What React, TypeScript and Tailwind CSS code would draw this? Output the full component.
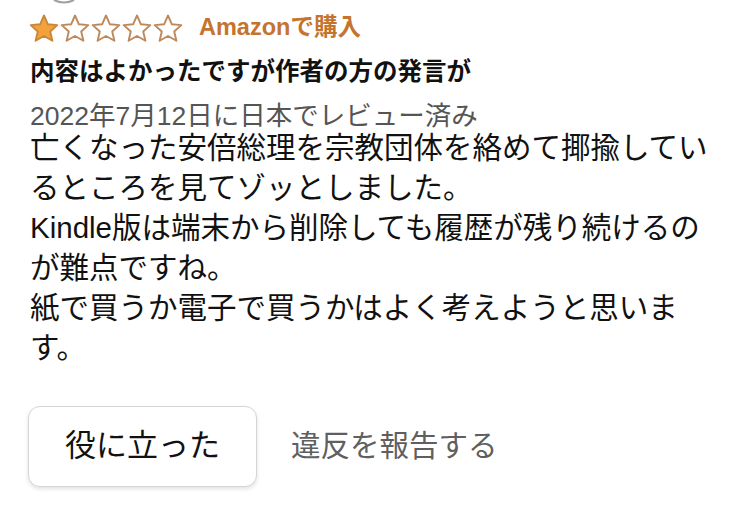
import React from 'react'

const font = '"Liberation Sans", "Noto Sans CJK JP", sans-serif'

const Star = ({ filled }: { filled: boolean }) => (
  <svg width="30" height="29" viewBox="0 0 30 29" className="shrink-0">
    <polygon
      points="15,1.5 18.9,10.3 28.3,11.1 21.2,17.5 23.4,26.8 15,22 6.6,26.8 8.8,17.5 1.7,11.1 11.1,10.3"
      fill={filled ? '#f3a23a' : '#ffffff'}
      stroke={filled ? '#c9873d' : '#bd895a'}
      strokeWidth="1.9"
      strokeLinejoin="round"
    />
  </svg>
)

export default function App() {
  return (
    <div
      className="w-[731px] h-[505px] bg-white overflow-hidden relative"
      style={{ fontFamily: font }}
    >
      {/* edge of the avatar above, cut off */}
      <svg width="24" height="5" className="absolute left-[52px] top-0">
        <path d="M2 0 Q12 5 22 0" fill="none" stroke="#a0a0a0" strokeWidth="2" />
      </svg>
      <div className="pl-[30px] pt-[8px]">
        <div className="flex items-center h-[40px]">
          <div className="flex gap-[1px] -ml-[1px]">
            <Star filled />
            <Star filled={false} />
            <Star filled={false} />
            <Star filled={false} />
            <Star filled={false} />
          </div>
          <span className="ml-[16px] text-[23.5px] font-bold text-[#c4742f] leading-none">
            Amazonで購入
          </span>
        </div>
        <h1 className="mt-[6px] text-[24.5px] font-bold leading-[36px] text-[#111]">
          内容はよかったですが作者の方の発言が
        </h1>
        <p className="mt-[14px] text-[26.5px] leading-[24px] text-[#555]">
          2022年7月12日に日本でレビュー済み
        </p>
        <div className="w-[690px] text-[29.5px] leading-[40px] text-[#111]">
          <p>亡くなった安倍総理を宗教団体を絡めて揶揄しているところを見てゾッとしました。</p>
          <p>Kindle版は端末から削除しても履歴が残り続けるのが難点ですね。</p>
          <p>紙で買うか電子で買うかはよく考えようと思います。</p>
        </div>
        <div className="mt-[38px] flex items-center">
          <button className="-ml-[2px] w-[229px] h-[81px] rounded-[12px] border border-[#d5d5d5] bg-white shadow-[0_2px_4px_rgba(0,0,0,0.12)] text-[31px] text-[#111]">
            役に立った
          </button>
          <span className="ml-[34px] text-[29.5px] text-[#5f5f5f]">違反を報告する</span>
        </div>
      </div>
    </div>
  )
}
